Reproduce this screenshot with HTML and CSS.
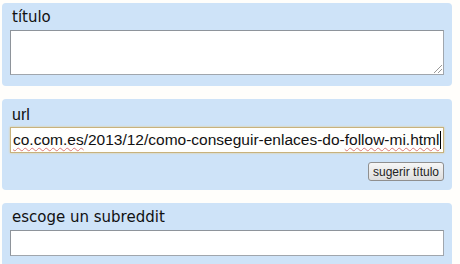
FILE: index.html
```html
<!DOCTYPE html>
<html>
<head>
<meta charset="utf-8">
<link rel="stylesheet" href="styles.css">
</head>
<body>
<div class="form">
  <div class="panel panel-title">
    <div class="label">título</div>
    <div class="textarea"><span class="grip"></span></div>
  </div>
  <div class="panel panel-url">
    <div class="label label-url">url</div>
    <div class="input focused"><span class="sp">co.com.es</span>/2013/12/como-conseguir-enlaces-do-<span class="sp">follow-mi.html</span><span class="caret"></span></div>
    <div class="actions"><button class="btn">sugerir título</button></div>
  </div>
  <div class="panel panel-sub">
    <div class="label">escoge un subreddit</div>
    <div class="input"></div>
  </div>
</div>
</body>
</html>
```
FILE: styles.css
```css
html, body {
  margin: 0;
  padding: 0;
  background: #fffefb;
  overflow: hidden;
}
.form {
  padding: 3px 8px 0 2px;
  display: flex;
  flex-direction: column;
  gap: 13px;
}
.panel {
  background: #cee3f8;
  border-radius: 4px;
  padding: 4px 8px 11px 8px;
}
.label {
  font-family: "DejaVu Sans", Verdana, sans-serif;
  font-size: 15px;
  color: #111;
  padding-left: 2px;
  line-height: 21px;
  height: 23px;
}
.label-url {
  font-family: "Liberation Sans", Arial, sans-serif;
  font-size: 16px;
  line-height: 24px;
  height: 24px;
}
.textarea {
  position: relative;
  height: 43px;
  background: #fff;
  border: 1px solid #a0a6ad;
  border-top-color: #8e949b;
  border-left-color: #8e949b;
}
.grip {
  position: absolute;
  right: 1px;
  bottom: 1px;
  width: 8px;
  height: 8px;
  background: linear-gradient(135deg, transparent 45%, #999 45%, #999 52%, transparent 52%, transparent 70%, #999 70%, #999 77%, transparent 77%);
}
.input {
  height: 24px;
  background: #fff;
  border: 1px solid #a0a6ad;
  border-top-color: #8e949b;
  border-left-color: #8e949b;
  font-family: "Liberation Sans", Arial, sans-serif;
  font-size: 15.5px;
  line-height: 24px;
  color: #111;
  padding-left: 2px;
  white-space: nowrap;
  overflow: hidden;
  display: flex;
  align-items: center;
}
.focused {
  border: 1px solid #c8b27c;
  box-shadow: 0 0 2px #e3c98c;
  background: #fffffd;
}
.sp {
  text-decoration: underline wavy #d77;
  text-decoration-thickness: 1px;
  text-underline-offset: 2px;
}
.caret {
  display: inline-block;
  width: 1px;
  height: 18px;
  background: #000;
  margin-left: 1px;
}
.actions {
  display: flex;
  justify-content: flex-end;
  padding-top: 9px;
}
.btn {
  font-family: "Liberation Sans", Arial, sans-serif;
  font-size: 12px;
  color: #222;
  height: 19px;
  padding: 0 4px;
  border: 1px solid #8f8f8f;
  border-radius: 3px;
  background: linear-gradient(#f6f6f6, #dedede);
  line-height: 16px;
}
.panel-url {
  padding-bottom: 9px;
}
```
